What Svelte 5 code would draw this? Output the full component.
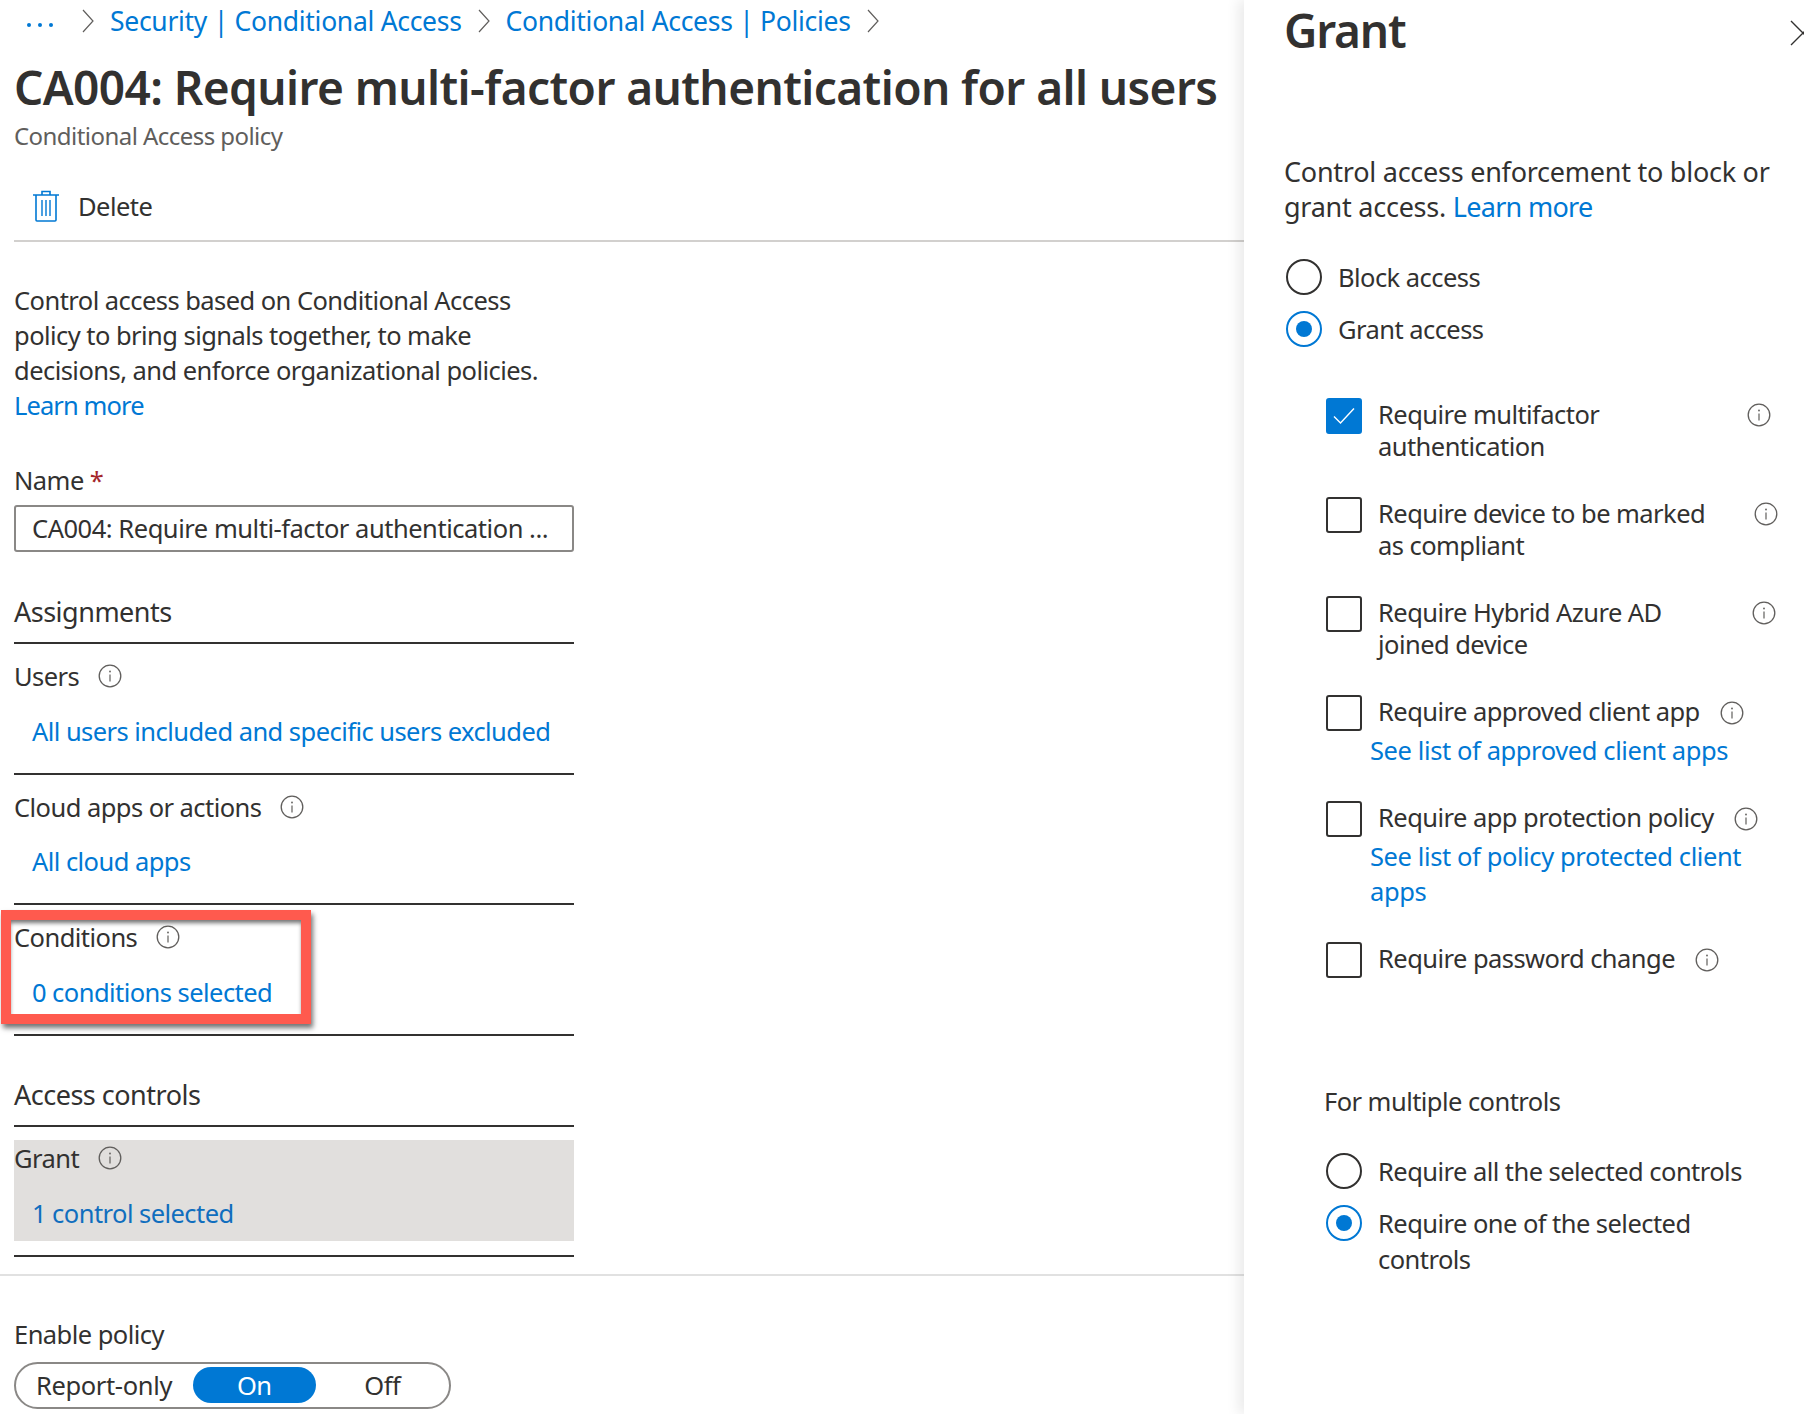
<script>
	const sections = [
		{ label: 'Users', link: 'All users included and specific users excluded' },
		{ label: 'Cloud apps or actions', link: 'All cloud apps' },
		{ label: 'Conditions', link: '0 conditions selected' }
	];

	const controls = [
		{ lines: 'Require multifactor authentication', checked: true, info: 1759, h: 98.5, w: 300 },
		{ lines: 'Require device to be marked as compliant', info: 1766, h: 99.5, w: 340 },
		{ lines: 'Require Hybrid Azure AD joined device', info: 1764, h: 99, w: 320 },
		{ lines: 'Require approved client app', info: 1732, link: 'See list of approved client apps', h: 106, w: 0 },
		{ lines: 'Require app protection policy', info: 1748, link: 'See list of policy protected client apps', h: 141, w: 0 },
		{ lines: 'Require password change', info: 1703, h: 40, w: 0 }
	];
</script>

{#snippet info()}
	<svg class="info" width="24" height="24" viewBox="0 0 24 24" fill="none">
		<circle cx="12" cy="12" r="10.8" stroke="#605e5c" stroke-width="1.3" />
		<path d="M12 10.5v7" stroke="#605e5c" stroke-width="1.2" />
		<circle cx="12" cy="7.5" r="0.9" fill="#605e5c" />
	</svg>
{/snippet}

{#snippet chevron()}
	<svg class="chev" width="12" height="24" viewBox="0 0 12 24" fill="none">
		<path d="M1 1l10 11L1 23" stroke="#605e5c" stroke-width="1.2" />
	</svg>
{/snippet}

<div class="page">
	<main class="main">
		<nav class="crumbs">
			<span class="dots">
				<i></i><i></i><i></i>
			</span>
			{@render chevron()}
			<a href="#security">Security | Conditional Access</a>
			{@render chevron()}
			<a href="#policies">Conditional Access | Policies</a>
			{@render chevron()}
		</nav>

		<h1>CA004: Require multi-factor authentication for all users</h1>
		<p class="sub">Conditional Access policy</p>

		<div class="toolbar">
			<svg width="26" height="32" viewBox="0 0 26 32" fill="none" stroke="#0078d4" stroke-width="1.6">
				<path d="M0 5h26M9 5V1.5h8V5M3 5v25a1 1 0 0 0 1 1h18a1 1 0 0 0 1-1V5" />
				<path d="M9 10v16M13 10v16M17 10v16" stroke-width="1.4" />
			</svg>
			<span>Delete</span>
		</div>

		<div class="form">
			<p class="intro">
				Control access based on Conditional Access<br />
				policy to bring signals together, to make<br />
				decisions, and enforce organizational policies.<br />
				<a href="#learn">Learn more</a>
			</p>

			<div class="name-label">Name <span class="req">*</span></div>
			<div class="input">CA004: Require multi-factor authentication ...</div>

			<h2 class="group first">Assignments</h2>
			{#each sections as s}
				<section class="row">
					<div class="row-label">{s.label} {@render info()}</div>
					<a class="row-link" href="#row">{s.link}</a>
				</section>
			{/each}

			<h2 class="group">Access controls</h2>
			<section class="row grant">
				<div class="grant-bg">
					<div class="row-label">Grant {@render info()}</div>
					<a class="row-link" href="#grant">1 control selected</a>
				</div>
			</section>
		</div>

		<div class="enable">
			<div class="enable-label">Enable policy</div>
			<div class="toggle">
				<span class="opt report">Report-only</span>
				<span class="opt on">On</span>
				<span class="opt off">Off</span>
			</div>
		</div>

		<div class="callout"></div>
	</main>

	<aside class="panel">
		<header class="panel-head">
			<h2>Grant</h2>
			<svg class="close" width="26" height="26" viewBox="0 0 26 26" fill="none">
				<path d="M1 1l24 24M25 1L1 25" stroke="#323130" stroke-width="1.4" />
			</svg>
		</header>

		<p class="panel-intro">
			Control access enforcement to block or<br />
			grant access. <a href="#learn">Learn more</a>
		</p>

		<div class="radios">
			<label class="radio"><span class="circle"></span>Block access</label>
			<label class="radio"><span class="circle sel"></span>Grant access</label>
		</div>

		<div class="controls">
			{#each controls as c}
				<div class="control" style="height: {c.h}px">
					<span class="box" class:checked={c.checked}>
						{#if c.checked}
							<svg width="22" height="18" viewBox="0 0 22 18" fill="none">
								<path d="M1 9.5l6.5 6.5L21 1.5" stroke="#fff" stroke-width="1.4" />
							</svg>
						{/if}
					</span>
					<div class="control-body">
						<div class="control-text" style={c.w ? `width: ${c.w}px` : ''}>
							{c.lines}
						</div>
						{#if !c.w}
							<span class="inline-info">{@render info()}</span>
						{/if}
						{#if c.link}
							<a class="control-link" href="#list">{c.link}</a>
						{/if}
					</div>
					{#if c.w}
						<span class="end-info" style="left: {c.info - 1326 - 12}px">{@render info()}</span>
					{/if}
				</div>
			{/each}
		</div>

		<div class="multi">
			<div class="multi-title">For multiple controls</div>
			<label class="radio"><span class="circle"></span>Require all the selected controls</label>
			<label class="radio wrap"><span class="circle sel"></span><span>Require one of the selected<br />controls</span></label>
		</div>
	</aside>
</div>

<style>
	:global(body) {
		margin: 0;
		background: #fff;
		overflow: hidden;
	}

	.page {
		display: flex;
		width: 1804px;
		height: 1414px;
		overflow: hidden;
		font-family: 'Noto Sans', sans-serif;
		font-size: 25.5px;
		letter-spacing: -0.55px;
		color: #323130;
	}

	a {
		color: #0078d4;
		text-decoration: none;
	}

	.main {
		position: relative;
		flex: 0 0 1244px;
		width: 1244px;
	}

	.crumbs {
		display: flex;
		align-items: center;
		height: 42px;
		padding-left: 27px;
		font-size: 26.5px;
		letter-spacing: -0.3px;
	}

	.crumbs a {
		margin: 0 16px;
		white-space: nowrap;
	}

	.dots {
		display: flex;
		gap: 7px;
		margin-right: 29px;
		margin-top: 7px;
	}

	.dots i {
		width: 4px;
		height: 4px;
		border-radius: 50%;
		background: #0078d4;
	}

	.chev {
		flex: none;
	}

	h1 {
		margin: 15px 0 0 14px;
		font-size: 46px;
		font-weight: 600;
		line-height: 60px;
		letter-spacing: -0.58px;
		white-space: nowrap;
	}

	.sub {
		margin: 4px 0 0 14px;
		line-height: 30px;
		font-size: 24px;
		color: #605e5c;
	}

	.toolbar {
		display: flex;
		align-items: center;
		gap: 19px;
		height: 69px;
		margin: 20px 0 0 14px;
		padding-left: 19px;
		border-bottom: 2px solid #d2d0ce;
		padding-bottom: 0;
	}

	.form {
		width: 560px;
		margin-left: 14px;
	}

	.intro {
		margin: 41px 0 0;
		line-height: 35px;
	}

	.intro a {
		letter-spacing: -0.9px;
	}

	.name-label {
		margin-top: 40px;
		line-height: 34px;
	}

	.req {
		color: #a4262c;
	}

	.input {
		box-sizing: border-box;
		height: 47px;
		margin-top: 8px;
		padding-left: 16px;
		border: 2px solid #8a8886;
		border-radius: 3px;
		line-height: 43px;
		letter-spacing: -0.47px;
		white-space: nowrap;
	}

	.group {
		margin: 42px 0 0;
		padding-bottom: 13px;
		border-bottom: 2px solid #323130;
		font-size: 27px;
		font-weight: 400;
		line-height: 34px;
		letter-spacing: -0.5px;
	}

	.group.first {
		margin-top: 43px;
	}

	.row {
		padding: 15px 0 25px;
		border-bottom: 2px solid #323130;
	}

	.row-label {
		display: flex;
		align-items: center;
		gap: 19px;
		line-height: 34px;
	}

	.row-link {
		display: block;
		margin: 20.5px 0 0 18px;
		line-height: 34px;
		white-space: nowrap;
	}

	.row.grant {
		padding: 13px 0 14px;
	}

	.grant-bg {
		padding: 1px 0 11px;
		background: #e1dfdd;
	}

	.grant-bg .row-link {
		margin-top: 21px;
		color: #106ebe;
	}

	.enable {
		margin: 17px 0 0;
		padding: 41px 0 0 14px;
		border-top: 2px solid #e1e1e1;
	}

	.enable-label {
		line-height: 34px;
	}

	.toggle {
		position: relative;
		display: flex;
		align-items: center;
		box-sizing: border-box;
		width: 437px;
		height: 47px;
		margin-top: 11px;
		padding: 0 4px;
		border: 2px solid #8a8886;
		border-radius: 24px;
	}

	.opt {
		line-height: 36px;
		text-align: center;
	}

	.report {
		width: 175px;
		padding-right: 5px;
		box-sizing: border-box;
		letter-spacing: -0.35px;
	}

	.on {
		width: 124px;
		border-radius: 18px;
		background: #0078d4;
		color: #fff;
	}

	.off {
		width: 131px;
		padding-left: 4px;
		box-sizing: border-box;
	}

	/* red annotation drawn over the screenshot */
	.callout {
		position: absolute;
		left: 1px;
		top: 910px;
		box-sizing: border-box;
		width: 310px;
		height: 114px;
		border: 10px solid #ff5a4e;
		box-shadow:
			2px 4px 5px rgba(0, 0, 0, 0.55),
			inset 0 4px 4px -1px rgba(0, 0, 0, 0.55);
	}

	.panel {
		position: relative;
		flex: 1;
		padding-left: 40px;
		background: #fff;
		box-shadow: -6px 0 12px rgba(0, 0, 0, 0.08);
	}

	.panel-head {
		height: 64px;
	}

	.panel-head h2 {
		margin: 0;
		font-size: 46px;
		font-weight: 600;
		line-height: 60px;
		letter-spacing: -1.2px;
	}

	.close {
		position: absolute;
		left: 546px;
		top: 20px;
	}

	.panel-intro {
		margin: 90px 0 0;
		font-size: 27px;
		line-height: 35px;
		letter-spacing: -0.25px;
	}

	.panel-intro a {
		letter-spacing: -0.7px;
	}

	.radios {
		margin-top: 35px;
	}

	.radio {
		display: flex;
		align-items: center;
		gap: 16px;
		height: 36px;
		margin-bottom: 16px;
		padding-left: 2px;
		white-space: nowrap;
	}

	.circle {
		box-sizing: border-box;
		flex: none;
		display: flex;
		align-items: center;
		justify-content: center;
		width: 36px;
		height: 36px;
		border: 2px solid #323130;
		border-radius: 50%;
	}

	.circle.sel {
		border-color: #0078d4;
	}

	.circle.sel::after {
		content: '';
		width: 16px;
		height: 16px;
		border-radius: 50%;
		background: #0078d4;
	}

	.controls {
		margin: 51px 0 0 42px;
	}

	.control {
		position: relative;
		display: flex;
		gap: 16px;
	}

	.box {
		box-sizing: border-box;
		flex: none;
		display: flex;
		align-items: center;
		justify-content: center;
		width: 36px;
		height: 36px;
		border: 2px solid #323130;
		border-radius: 3px;
	}

	.box.checked {
		border-color: #0078d4;
		background: #0078d4;
	}

	.control-body {
		flex: 1;
		line-height: 32px;
	}

	.control-text {
		display: inline-block;
	}

	.inline-info {
		display: inline-block;
		margin-left: 14px;
		vertical-align: -4px;
	}

	.info {
		display: block;
		flex: none;
	}

	.end-info {
		position: absolute;
		top: 5px;
	}

	.control-link {
		display: block;
		width: 390px;
		margin: 6px 0 0 -8px;
		line-height: 35px;
		letter-spacing: -0.4px;
	}

	.multi {
		margin: 102px 0 0 40px;
	}

	.multi-title {
		line-height: 34px;
		margin-bottom: 35px;
	}

	.multi .radio {
		padding-left: 0;
		margin-left: 2px;
	}

	.radio.wrap {
		align-items: flex-start;
		height: auto;
		line-height: 36px;
	}
</style>
